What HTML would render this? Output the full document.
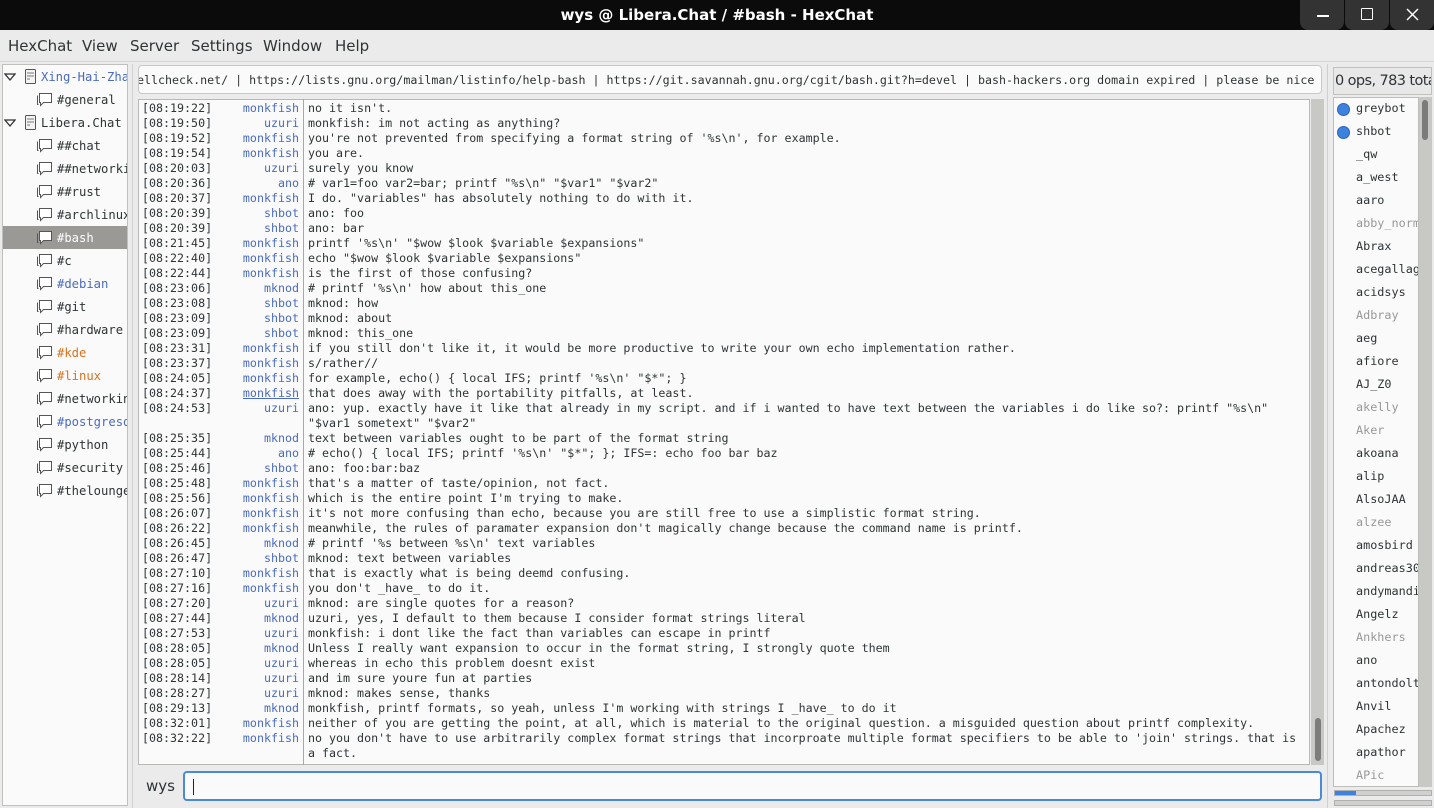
<!DOCTYPE html>
<html><head><meta charset="utf-8"><style>
*{margin:0;padding:0;box-sizing:border-box}
body{width:1434px;height:808px;background:#ebebeb;position:relative;overflow:hidden;font-family:"DejaVu Sans","Liberation Sans",sans-serif;color:#2e3436}
.abs{position:absolute}
#title{left:0;top:0;width:1434px;height:30px;background:#0b0b0b;color:#fff;font-size:15px;font-weight:bold;text-align:center;line-height:30px}
.wb{top:0;width:44px;height:30px;background:#333;border-radius:0 0 8px 8px}
#menu{top:30px;left:0;width:1434px;height:32px;border-bottom:1px solid #d6d6d6;font-size:15px;line-height:33px}
#menu span{position:absolute;top:0}
#tree{left:2px;top:64px;width:126px;height:742px;background:#fafafa;border:1px solid #c0c0bd;overflow:hidden;font-family:"DejaVu Sans Mono",monospace;font-size:12.2px}
.tr{position:absolute;left:0;width:126px;height:23px;line-height:24px;white-space:nowrap}
.tr svg{position:absolute;top:4px}
#topic{left:138px;top:65px;width:1184px;height:29px;background:#fafafa;border:1px solid #c8c8c5;border-radius:4px;font-family:"DejaVu Sans Mono",monospace;font-size:11.65px;line-height:28px;white-space:nowrap;overflow:hidden}
#chat{left:138px;top:99px;width:1172px;height:666px;background:#fafafa;border:1px solid #b8b8b5;overflow:hidden;font-family:"DejaVu Sans Mono",monospace;font-size:11.65px;line-height:15px}
#sep{left:303px;top:99px;width:1px;height:666px;background:#a8a8a5}
.l{position:relative;height:15px;white-space:nowrap}
.t{position:absolute;left:3px}
.n{position:absolute;right:1010px;color:#4a6bbf}
.m{position:absolute;left:169px}
#vs{left:1311px;top:99px;width:13px;height:666px;background:#c8c8c5}
#input{left:183px;top:771px;width:1139px;height:30px;background:#fafafa;border:2px solid #4a8ad8;border-radius:4px}
#ul{left:1333px;top:97px;width:86px;height:690px;background:#fafafa;border:1px solid #bdbdba;overflow:hidden;font-family:"DejaVu Sans Mono",monospace;font-size:11.8px}
.u{position:absolute;left:22px;height:23px;line-height:21px;white-space:nowrap}
.g{color:#98989a}
</style></head><body>
<div id="title" class="abs">wys @ Libera.Chat / #bash - HexChat</div>
<div class="abs wb" style="left:1300px"></div><div class="abs wb" style="left:1345px"></div><div class="abs wb" style="left:1390px"></div>
<div class="abs" style="left:1317px;top:15px;width:12px;height:1.5px;background:#fff"></div>
<div class="abs" style="left:1361px;top:8px;width:12px;height:12px;border:1.5px solid #fff;border-radius:1px"></div>
<svg class="abs" style="left:1406px;top:8px" width="13" height="13"><path d="M1 1L12 12M12 1L1 12" stroke="#fff" stroke-width="1.5"/></svg>
<div id="menu" class="abs"><span style="left:8px">HexChat</span><span style="left:82px">View</span><span style="left:130px">Server</span><span style="left:191px">Settings</span><span style="left:263px">Window</span><span style="left:335px">Help</span></div>
<div class="abs" style="left:132px;top:64px;width:1px;height:744px;background:#d0d0ce"></div>
<div class="abs" style="left:1327px;top:64px;width:1px;height:744px;background:#d0d0ce"></div>

<div id="tree" class="abs">
<svg width="0" height="0" style="position:absolute"><defs>
<g id="b"><path d="M2.5 1.5h12v9h-8l-3 3v-3h-1z" fill="#fff" stroke="#555" stroke-width="1"/><path d="M0.5 3.5v9h1" fill="none" stroke="#555"/></g>
<g id="s"><rect x="2.5" y="0.5" width="10" height="14" rx="1" fill="#f4f4f4" stroke="#555"/><path d="M4 4h7M4 7h7M4 10h3" stroke="#777"/></g>
</defs></svg>
<div class="tr" style="top:0"><svg width="12" height="12" style="left:1px;top:6px"><path d="M1 3h10L6 9z" fill="none" stroke="#333" stroke-width="1.3"/></svg><svg width="15" height="16" style="left:20px"><use href="#s"/></svg><span style="position:absolute;left:38px;color:#4a6bbf">Xing-Hai-Zhang</span></div>
<div class="tr" style="top:23px"><svg width="16" height="15" style="left:34px"><use href="#b"/></svg><span style="position:absolute;left:54px">#general</span></div>
<div class="tr" style="top:46px"><svg width="12" height="12" style="left:1px;top:6px"><path d="M1 3h10L6 9z" fill="none" stroke="#333" stroke-width="1.3"/></svg><svg width="15" height="16" style="left:20px"><use href="#s"/></svg><span style="position:absolute;left:38px">Libera.Chat</span></div>
<div class="tr" style="top:69px"><svg width="16" height="15" style="left:34px"><use href="#b"/></svg><span style="position:absolute;left:54px">##chat</span></div>
<div class="tr" style="top:92px"><svg width="16" height="15" style="left:34px"><use href="#b"/></svg><span style="position:absolute;left:54px">##networking</span></div>
<div class="tr" style="top:115px"><svg width="16" height="15" style="left:34px"><use href="#b"/></svg><span style="position:absolute;left:54px">##rust</span></div>
<div class="tr" style="top:138px"><svg width="16" height="15" style="left:34px"><use href="#b"/></svg><span style="position:absolute;left:54px">#archlinux</span></div>
<div class="tr" style="top:161px;background:#9a9996;color:#fff"><svg width="16" height="15" style="left:34px"><use href="#b"/></svg><span style="position:absolute;left:54px">#bash</span></div>
<div class="tr" style="top:184px"><svg width="16" height="15" style="left:34px"><use href="#b"/></svg><span style="position:absolute;left:54px">#c</span></div>
<div class="tr" style="top:207px"><svg width="16" height="15" style="left:34px"><use href="#b"/></svg><span style="position:absolute;left:54px;color:#4a6bbf">#debian</span></div>
<div class="tr" style="top:230px"><svg width="16" height="15" style="left:34px"><use href="#b"/></svg><span style="position:absolute;left:54px">#git</span></div>
<div class="tr" style="top:253px"><svg width="16" height="15" style="left:34px"><use href="#b"/></svg><span style="position:absolute;left:54px">#hardware</span></div>
<div class="tr" style="top:276px"><svg width="16" height="15" style="left:34px"><use href="#b"/></svg><span style="position:absolute;left:54px;color:#d9731f">#kde</span></div>
<div class="tr" style="top:299px"><svg width="16" height="15" style="left:34px"><use href="#b"/></svg><span style="position:absolute;left:54px;color:#d9731f">#linux</span></div>
<div class="tr" style="top:322px"><svg width="16" height="15" style="left:34px"><use href="#b"/></svg><span style="position:absolute;left:54px">#networking</span></div>
<div class="tr" style="top:345px"><svg width="16" height="15" style="left:34px"><use href="#b"/></svg><span style="position:absolute;left:54px;color:#4a6bbf">#postgresql</span></div>
<div class="tr" style="top:368px"><svg width="16" height="15" style="left:34px"><use href="#b"/></svg><span style="position:absolute;left:54px">#python</span></div>
<div class="tr" style="top:391px"><svg width="16" height="15" style="left:34px"><use href="#b"/></svg><span style="position:absolute;left:54px">#security</span></div>
<div class="tr" style="top:414px"><svg width="16" height="15" style="left:34px"><use href="#b"/></svg><span style="position:absolute;left:54px">#thelounge</span></div>
</div>

<div id="topic" class="abs"><span style="margin-left:-2px">ellcheck.net/ | https://lists.gnu.org/mailman/listinfo/help-bash | https://git.savannah.gnu.org/cgit/bash.git?h=devel | bash-hackers.org domain expired | please be nice</span></div>

<div id="chat" class="abs"><div style="height:1px"></div>
<div class="l"><span class="t">[08:19:22]</span><span class="n">monkfish</span><span class="m">no it isn't.</span></div>
<div class="l"><span class="t">[08:19:50]</span><span class="n">uzuri</span><span class="m">monkfish: im not acting as anything?</span></div>
<div class="l"><span class="t">[08:19:52]</span><span class="n">monkfish</span><span class="m">you're not prevented from specifying a format string of '%s\n', for example.</span></div>
<div class="l"><span class="t">[08:19:54]</span><span class="n">monkfish</span><span class="m">you are.</span></div>
<div class="l"><span class="t">[08:20:03]</span><span class="n">uzuri</span><span class="m">surely you know</span></div>
<div class="l"><span class="t">[08:20:36]</span><span class="n">ano</span><span class="m"># var1=foo var2=bar; printf "%s\n" "$var1" "$var2"</span></div>
<div class="l"><span class="t">[08:20:37]</span><span class="n">monkfish</span><span class="m">I do. "variables" has absolutely nothing to do with it.</span></div>
<div class="l"><span class="t">[08:20:39]</span><span class="n">shbot</span><span class="m">ano: foo</span></div>
<div class="l"><span class="t">[08:20:39]</span><span class="n">shbot</span><span class="m">ano: bar</span></div>
<div class="l"><span class="t">[08:21:45]</span><span class="n">monkfish</span><span class="m">printf '%s\n' "$wow $look $variable $expansions"</span></div>
<div class="l"><span class="t">[08:22:40]</span><span class="n">monkfish</span><span class="m">echo "$wow $look $variable $expansions"</span></div>
<div class="l"><span class="t">[08:22:44]</span><span class="n">monkfish</span><span class="m">is the first of those confusing?</span></div>
<div class="l"><span class="t">[08:23:06]</span><span class="n">mknod</span><span class="m"># printf '%s\n' how about this_one</span></div>
<div class="l"><span class="t">[08:23:08]</span><span class="n">shbot</span><span class="m">mknod: how</span></div>
<div class="l"><span class="t">[08:23:09]</span><span class="n">shbot</span><span class="m">mknod: about</span></div>
<div class="l"><span class="t">[08:23:09]</span><span class="n">shbot</span><span class="m">mknod: this_one</span></div>
<div class="l"><span class="t">[08:23:31]</span><span class="n">monkfish</span><span class="m">if you still don't like it, it would be more productive to write your own echo implementation rather.</span></div>
<div class="l"><span class="t">[08:23:37]</span><span class="n">monkfish</span><span class="m">s/rather//</span></div>
<div class="l"><span class="t">[08:24:05]</span><span class="n">monkfish</span><span class="m">for example, echo() { local IFS; printf '%s\n' "$*"; }</span></div>
<div class="l"><span class="t">[08:24:37]</span><span class="n" style="text-decoration:underline">monkfish</span><span class="m">that does away with the portability pitfalls, at least.</span></div>
<div class="l"><span class="t">[08:24:53]</span><span class="n">uzuri</span><span class="m">ano: yup. exactly have it like that already in my script. and if i wanted to have text between the variables i do like so?: printf "%s\n"</span></div>
<div class="l"><span class="m">"$var1 sometext" "$var2"</span></div>
<div class="l"><span class="t">[08:25:35]</span><span class="n">mknod</span><span class="m">text between variables ought to be part of the format string</span></div>
<div class="l"><span class="t">[08:25:44]</span><span class="n">ano</span><span class="m"># echo() { local IFS; printf '%s\n' "$*"; }; IFS=: echo foo bar baz</span></div>
<div class="l"><span class="t">[08:25:46]</span><span class="n">shbot</span><span class="m">ano: foo:bar:baz</span></div>
<div class="l"><span class="t">[08:25:48]</span><span class="n">monkfish</span><span class="m">that's a matter of taste/opinion, not fact.</span></div>
<div class="l"><span class="t">[08:25:56]</span><span class="n">monkfish</span><span class="m">which is the entire point I'm trying to make.</span></div>
<div class="l"><span class="t">[08:26:07]</span><span class="n">monkfish</span><span class="m">it's not more confusing than echo, because you are still free to use a simplistic format string.</span></div>
<div class="l"><span class="t">[08:26:22]</span><span class="n">monkfish</span><span class="m">meanwhile, the rules of paramater expansion don't magically change because the command name is printf.</span></div>
<div class="l"><span class="t">[08:26:45]</span><span class="n">mknod</span><span class="m"># printf '%s between %s\n' text variables</span></div>
<div class="l"><span class="t">[08:26:47]</span><span class="n">shbot</span><span class="m">mknod: text between variables</span></div>
<div class="l"><span class="t">[08:27:10]</span><span class="n">monkfish</span><span class="m">that is exactly what is being deemd confusing.</span></div>
<div class="l"><span class="t">[08:27:16]</span><span class="n">monkfish</span><span class="m">you don't _have_ to do it.</span></div>
<div class="l"><span class="t">[08:27:20]</span><span class="n">uzuri</span><span class="m">mknod: are single quotes for a reason?</span></div>
<div class="l"><span class="t">[08:27:44]</span><span class="n">mknod</span><span class="m">uzuri, yes, I default to them because I consider format strings literal</span></div>
<div class="l"><span class="t">[08:27:53]</span><span class="n">uzuri</span><span class="m">monkfish: i dont like the fact than variables can escape in printf</span></div>
<div class="l"><span class="t">[08:28:05]</span><span class="n">mknod</span><span class="m">Unless I really want expansion to occur in the format string, I strongly quote them</span></div>
<div class="l"><span class="t">[08:28:05]</span><span class="n">uzuri</span><span class="m">whereas in echo this problem doesnt exist</span></div>
<div class="l"><span class="t">[08:28:14]</span><span class="n">uzuri</span><span class="m">and im sure youre fun at parties</span></div>
<div class="l"><span class="t">[08:28:27]</span><span class="n">uzuri</span><span class="m">mknod: makes sense, thanks</span></div>
<div class="l"><span class="t">[08:29:13]</span><span class="n">mknod</span><span class="m">monkfish, printf formats, so yeah, unless I'm working with strings I _have_ to do it</span></div>
<div class="l"><span class="t">[08:32:01]</span><span class="n">monkfish</span><span class="m">neither of you are getting the point, at all, which is material to the original question. a misguided question about printf complexity.</span></div>
<div class="l"><span class="t">[08:32:22]</span><span class="n">monkfish</span><span class="m">no you don't have to use arbitrarily complex format strings that incorproate multiple format specifiers to be able to 'join' strings. that is</span></div>
<div class="l"><span class="m">a fact.</span></div>
</div>
<div id="sep" class="abs"></div>
<div id="vs" class="abs"><div style="position:absolute;left:4px;top:619px;width:6px;height:43px;background:#7c7c7a;border-radius:3px"></div></div>

<div class="abs" style="left:146px;top:777px;font-size:15px">wys</div>
<div id="input" class="abs"><div style="position:absolute;left:8px;top:6px;width:1px;height:16px;background:#222"></div></div>

<div class="abs" style="left:1333px;top:67px;width:99px;height:28px;border:1px solid #c0c0bd;background:#e8e8e8;font-size:14.5px;line-height:26px;white-space:nowrap;overflow:hidden;padding-left:1px;letter-spacing:-0.6px">0 ops, 783 total</div>
<div id="ul" class="abs">
<div style="position:absolute;left:3px;top:5px;width:13px;height:13px;border-radius:50%;background:#3e82e0;border:1px solid #2a64b8"></div>
<div style="position:absolute;left:3px;top:28px;width:13px;height:13px;border-radius:50%;background:#3e82e0;border:1px solid #2a64b8"></div>
<div class="u" style="top:0">greybot</div><div class="u" style="top:23px">shbot</div><div class="u" style="top:46px">_qw</div><div class="u" style="top:69px">a_west</div><div class="u" style="top:92px">aaro</div><div class="u g" style="top:115px">abby_norman</div><div class="u" style="top:138px">Abrax</div><div class="u" style="top:161px">acegallagher</div><div class="u" style="top:184px">acidsys</div><div class="u g" style="top:207px">Adbray</div><div class="u" style="top:230px">aeg</div><div class="u" style="top:253px">afiore</div><div class="u" style="top:276px">AJ_Z0</div><div class="u g" style="top:299px">akelly</div><div class="u g" style="top:322px">Aker</div><div class="u" style="top:345px">akoana</div><div class="u" style="top:368px">alip</div><div class="u" style="top:391px">AlsoJAA</div><div class="u g" style="top:414px">alzee</div><div class="u" style="top:437px">amosbird</div><div class="u" style="top:460px">andreas303</div><div class="u" style="top:483px">andymandias</div><div class="u" style="top:506px">Angelz</div><div class="u g" style="top:529px">Ankhers</div><div class="u" style="top:552px">ano</div><div class="u" style="top:575px">antondoltsev</div><div class="u" style="top:598px">Anvil</div><div class="u" style="top:621px">Apachez</div><div class="u" style="top:644px">apathor</div><div class="u g" style="top:667px">APic</div>
</div>
<div class="abs" style="left:1419px;top:97px;width:13px;height:690px;background:#c8c8c5"><div style="position:absolute;left:3px;top:3px;width:6px;height:40px;background:#7c7c7a;border-radius:3px"></div></div>
<div class="abs" style="left:1334px;top:790px;width:98px;height:6px;background:#d0d0ce;border:1px solid #b0b0ae"><div style="width:21px;height:4px;background:#3e82e0"></div></div>
<div class="abs" style="left:1334px;top:800px;width:98px;height:6px;background:#d0d0ce;border:1px solid #b0b0ae"></div>
</body></html>
